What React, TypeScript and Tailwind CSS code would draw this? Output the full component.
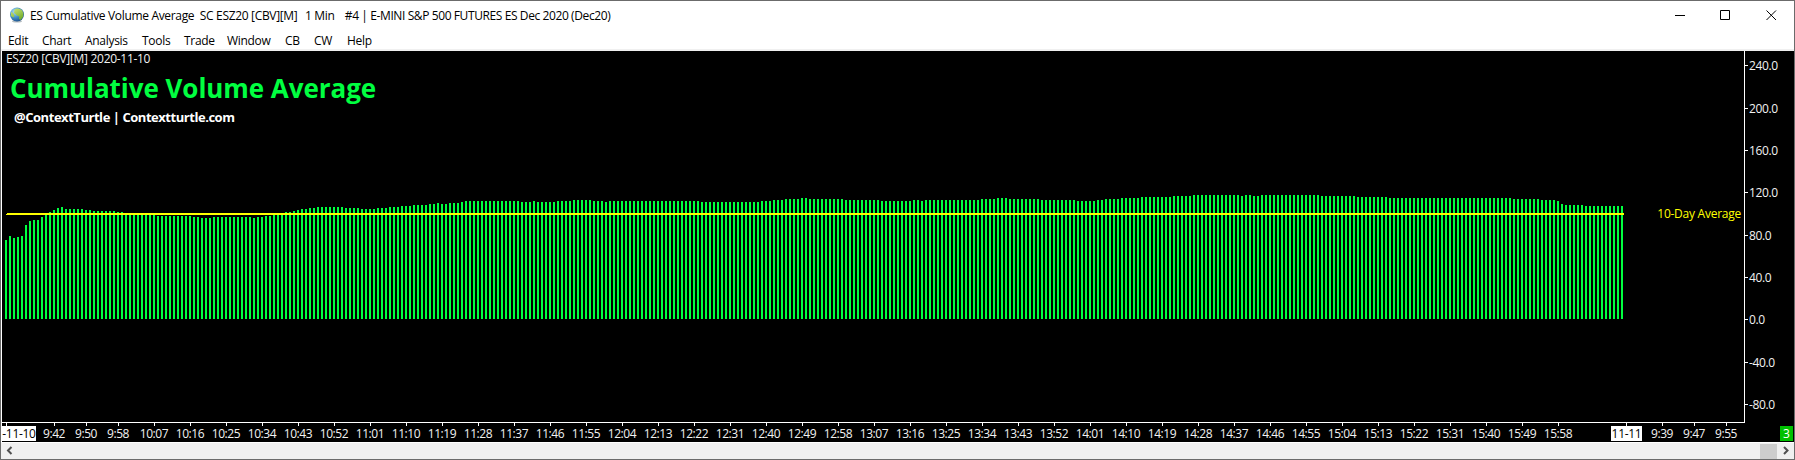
import React from "react";

const runs: [number, number][] = [
  [240, 1], [236, 1], [238, 1], [237, 1], [236, 1], [225, 1], [221, 1], [220, 2], [217, 1], [215, 1], [212, 1],
  [210, 1], [208, 1], [207, 1], [209, 5], [210, 2], [211, 6], [212, 2], [214, 8], [216, 9], [217, 2], [218, 3],
  [217, 10], [218, 1], [217, 2], [216, 2], [214, 3], [212, 2], [211, 1], [210, 1],
  [209, 2], [208, 2], [207, 7], [208, 4], [209, 4], [208, 3], [207, 3], [206, 3], [205, 4], [204, 2], [203, 1],
  [204, 2], [203, 3], [202, 1], [201, 14], [202, 3], [201, 1], [202, 5], [201, 4], [200, 5], [201, 3], [202, 1],
  [201, 23], [202, 15], [201, 3], [200, 3], [199, 4], [198, 2], [199, 9], [200, 9], [201, 8], [200, 2], [201, 1],
  [200, 14], [199, 4], [198, 3], [199, 8], [200, 9], [201, 5], [200, 2], [199, 4], [198, 5], [197, 8], [196, 5],
  [195, 12], [196, 1], [195, 2], [196, 2], [195, 15], [196, 9], [197, 8], [198, 31], [199, 7], [200, 4], [201, 1],
  [204, 1], [205, 5], [206, 10],
];
const tops = runs.flatMap(([y, n]) => Array<number>(n).fill(y));

const times: [string, number][] = [["9:42", 54], ["9:50", 86], ["9:58", 118]];
for (let m = 607; m <= 958; m += 9) {
  times.push([`${Math.floor(m / 60)}:${String(m % 60).padStart(2, "0")}`, 6 + (m - 570) * 4]);
}
times.push(["9:39", 1662], ["9:47", 1694], ["9:55", 1726]);

const prices: [string, number][] = [
  ["240.0", 65], ["200.0", 108], ["160.0", 150], ["120.0", 192], ["80.0", 235], ["40.0", 277], ["0.0", 319],
  ["-40.0", 362], ["-80.0", 404],
];

const menus: [string, string][] = [
  ["Edit", "w-[34px]"], ["Chart", "w-[43px]"], ["Analysis", "w-[57px]"], ["Tools", "w-[42px]"], ["Trade", "w-[43px]"],
  ["Window", "w-[58px]"], ["CB", "w-[29px]"], ["CW", "w-[33px]"], ["Help", "w-[40px]"],
];

function Globe() {
  return (
    <svg className="ml-[8px] mt-[6px] h-4 w-4 shrink-0" viewBox="0 0 16 16">
      <defs>
        <radialGradient id="sea" cx="0.35" cy="0.3" r="0.75">
          <stop offset="0" stopColor="#b5e2f5" />
          <stop offset="0.5" stopColor="#4a98cf" />
          <stop offset="1" stopColor="#1a4f8c" />
        </radialGradient>
        <linearGradient id="land" x1="0" y1="0" x2="0.6" y2="1">
          <stop offset="0" stopColor="#d2e880" />
          <stop offset="1" stopColor="#74ae2c" />
        </linearGradient>
      </defs>
      <ellipse cx="8" cy="14.300" rx="5" ry="1.200" fill="#b4bcc0" />
      <circle cx="8" cy="7.500" r="7" fill="url(#sea)" />
      <path d="M5.500 2.500C8 0.500 12 1.500 13.500 4l1 3-0.500 3-2.500 3-1.500-1 0.300-2.500L8 8.500 6.500 7 5 6z M2 5l2 1 1.500 3-1 1.500L2 9z" fill="url(#land)" />
    </svg>
  );
}

export default function App() {
  return (
    <div className="flex h-[460px] w-[1795px] flex-col overflow-hidden border border-[#6b6b6b] bg-white font-['Open_Sans','Noto_Sans',sans-serif] text-[12px] text-black">
      <header className="flex h-[29px] shrink-0">
        <Globe />
        <div className="ml-[5px] flex-1 whitespace-pre pt-[6px] leading-[18px] tracking-[-0.33px]">
          ES Cumulative Volume Average  SC ESZ20 [CBV][M]  <span className="ml-[2px]">1 Min   </span>
          <span className="ml-[2px] tracking-[-0.4px]">#4 | E-MINI S&amp;P 500 FUTURES ES Dec 2020 (Dec20)</span>
        </div>
        <svg className="h-[29px] w-[138px]" viewBox="0 0 138 29" fill="none" stroke="#000" strokeWidth="1">
          <path d="M19 14.500h10M64.500 9.500h9v9h-9zM110.500 9.500l9.500 9.500M120 9.500l-9.500 9.500" />
        </svg>
      </header>
      <nav className="flex h-[19px] shrink-0 pl-[7px] leading-[22px] tracking-[-0.3px]">
        {menus.map(([m, w]) => (
          <span key={m} className={`${w} shrink-0 whitespace-nowrap`}>{m}</span>
        ))}
      </nav>
      <div className="h-[2px] shrink-0 bg-[#f0f0f0]" />
      <main className="relative ml-px h-[391px] w-[1792px] shrink-0 overflow-hidden bg-black text-[#f2f2f2]">
        <svg className="absolute left-0 top-0 h-[391px] w-[1792px]" viewBox="2 51 1792 391" shapeRendering="crispEdges">
          {tops.map((y, i) => (
            <rect key={i} x={5 + i * 4} y={y} width="2" height={319 - y} fill="#00ff40" />
          ))}
          <rect x="7" y="213" width="1617" height="2" fill="#ff0" />
          <rect x="6" y="214" width="1" height="1" fill="#ff0" />
          <path d="M2 422h1743v1H2zM1744 51h1v372h-1z" fill="#fff" />
          {prices.map(([p, y]) => (
            <rect key={p} x="1745" y={y} width="3" height="1" fill="#fff" />
          ))}
          {[6, 1626, ...times.map((t) => t[1])].map((x) => (
            <rect key={x} x={x} y="423" width="1" height="3" fill="#fff" />
          ))}
        </svg>
        <div className="relative pl-[4px] leading-[16px] tracking-[-0.3px]">ESZ20 [CBV][M] 2020-11-10</div>
        <h1 className="relative mt-[2px] whitespace-nowrap pl-[8px] text-[26px] font-bold leading-[38px] tracking-[-0.05px] text-[#00ff40]">
          Cumulative Volume Average
        </h1>
        <div className="relative mt-px whitespace-nowrap pl-[12px] text-[13px] font-bold leading-[18px] tracking-[-0.46px] text-white">
          @ContextTurtle | Contextturtle.com
        </div>
        <div className="absolute right-[53px] top-[154px] leading-[18px] tracking-[-0.25px] text-[#ff0]">10-Day Average</div>
        {prices.map(([p, y]) => (
          <span key={p} className="absolute left-[1747px] leading-[16px] tracking-[-0.4px]" style={{ top: y - 58 }}>{p}</span>
        ))}
        {times.map(([t, x]) => (
          <span key={x} className="absolute top-[375px] w-10 text-center leading-[16px] tracking-[-0.4px]" style={{ left: x - 22 }}>{t}</span>
        ))}
        <span className="absolute left-0 top-[375px] h-[15px] w-[34px] whitespace-nowrap bg-white text-center leading-[15px] tracking-[-0.3px] text-black">-11-10</span>
        <span className="absolute left-[1609px] top-[375px] h-[15px] w-[31px] whitespace-nowrap bg-white text-center leading-[15px] tracking-[-0.3px] text-black">11-11</span>
        <span className="absolute left-[1778px] top-[375px] h-[15px] w-[13px] bg-[#00c000] text-center leading-[15px] text-white">3</span>
      </main>
      <footer className="flex h-[17px] shrink-0 items-center border-t border-white bg-[#f0f0f0]">
        <svg className="h-4 w-[17px]" viewBox="0 0 17 16" fill="none" stroke="#505050" strokeWidth="2"><path d="M10.500 4L7 7.500 10.500 11" /></svg>
        <div className="flex-1" />
        <div className="h-[15px] w-[17px] bg-[#cdcdcd]" />
        <svg className="h-4 w-[17px]" viewBox="0 0 17 16" fill="none" stroke="#505050" strokeWidth="2"><path d="M7 4l3.500 3.500L7 11" /></svg>
      </footer>
    </div>
  );
}
